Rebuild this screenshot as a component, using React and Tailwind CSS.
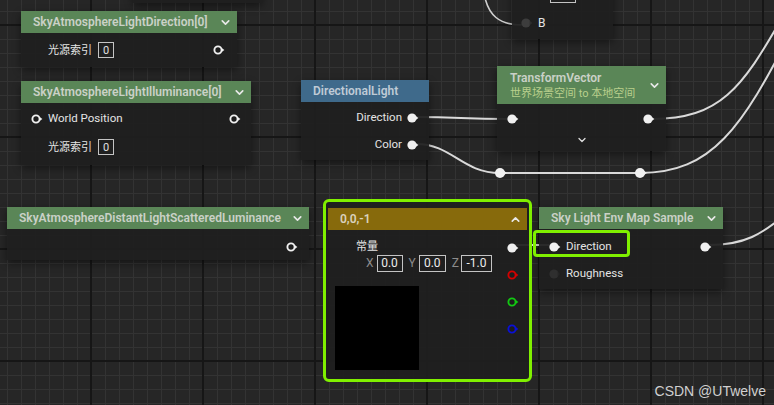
import React from "react";
import { ChevronDown, ChevronUp } from "lucide-react";

// Pin: filled dot with a little arrow, or a hollow ring for unlinked pins
const Pin = ({ hollow = false, color = "#f0f0f0", arrow }) => (
  <svg width="12" height="10" viewBox="0 0 12 10" className="shrink-0">
    {hollow ? (
      <circle cx="5" cy="5" r="3.6" fill="#1d1d1d" stroke={color} strokeWidth="1.9" />
    ) : (
      <circle cx="5" cy="5" r="4.6" fill={color} />
    )}
    <path d="M8.6 2.9 L11.4 5 L8.6 7.1 Z" fill={arrow || color} />
  </svg>
);

const Header = ({ title, bg, text = "text-[#cad1c7]", up = false, className = "" }) => (
  <div className={`flex h-[22px] items-center justify-between pl-3 pr-[5px] ${bg} ${className}`}>
    <span className={`text-[12px] font-semibold leading-none ${text}`}>{title}</span>
    {up ? (
      <ChevronUp size={13} strokeWidth={3} className="text-[#e8e8e8]" />
    ) : (
      <ChevronDown size={13} strokeWidth={3} className="text-[#e8e8e8]" />
    )}
  </div>
);

const IndexBox = ({ value }) => (
  <span className="flex h-[16px] w-[16px] items-center justify-center border border-[#c4c4c4] text-[11px] leading-none text-[#e0e0e0]">
    {value}
  </span>
);

const NumBox = ({ value, w }) => (
  <span className={`flex h-[17px] ${w} items-center justify-center border border-[#c4c4c4] text-[12px] leading-none text-[#ececec]`}>
    {value}
  </span>
);

const nodeBody = "bg-[rgba(31,31,31,0.94)]";
const nodeShadow = "shadow-[0_3px_8px_rgba(0,0,0,0.45)]";

function Grid() {
  return (
    <svg className="absolute inset-0" width="774" height="405">
      <defs>
        <pattern id="minor" width="14" height="14" patternUnits="userSpaceOnUse" x="7" y="11">
          <path d="M0 0.5 H14 M0.5 0 V14" stroke="#333333" strokeWidth="1" fill="none" />
        </pattern>
        <pattern id="major" width="112" height="112" patternUnits="userSpaceOnUse" x="90" y="24">
          <path d="M0 1 H112 M1 0 V112" stroke="#161616" strokeWidth="2" fill="none" />
        </pattern>
      </defs>
      <rect width="774" height="405" fill="#262626" />
      <rect width="774" height="405" fill="url(#minor)" />
      <rect width="774" height="405" fill="url(#major)" />
    </svg>
  );
}

function Wires() {
  const knot = (x, y) => (
    <g key={x}>
      <circle cx={x} cy={y} r="5" fill="#f2f2f2" />
      <path d={`M${x + 3.8} ${y - 2.2} L${x + 6.8} ${y} L${x + 3.8} ${y + 2.2} Z`} fill="#f2f2f2" />
    </g>
  );
  return (
    <svg className="absolute inset-0" width="774" height="405" fill="none">
      <g stroke="#d9d9d9" strokeWidth="2" strokeLinecap="round">
        <path d="M485 -2 C489 14, 498 25, 522 25" stroke="#cfcfcf" strokeWidth="1.6" />
        <path d="M416 117 C460 117, 462 119, 508 119" />
        <path d="M416 144 C452 144, 462 173, 500 173 L640 173" />
        <path d="M652 119 C720 119, 742 88, 782 18" />
        <path d="M640 173 C712 173, 742 128, 792 30" />
        <path d="M516 245 L550 245" />
        <path d="M709 245 C745 245, 762 234, 786 214" />
      </g>
      {knot(500, 173)}
      {knot(640, 173)}
    </svg>
  );
}

export default function App() {
  return (
    <div className="relative h-[405px] w-[774px] overflow-hidden bg-[#262626] font-['Roboto','Noto_Sans_CJK_SC',sans-serif] text-[#e4e4e4]">
      <Grid />
      <Wires />

      {/* partial nodes cut by the top edge */}
      <div className={`absolute left-[133px] top-[-20px] h-[23px] w-[129px] ${nodeBody} ${nodeShadow}`} />
      <div className={`absolute left-[512px] top-[-12px] flex h-[51px] w-[101px] flex-col ${nodeBody} ${nodeShadow}`}>
        <div className="ml-[38px] h-[15px] w-[26px] border border-[#c4c4c4]" />
        <div className="mt-[14px] flex items-center gap-[5px] pl-[9px]">
          <Pin color="#3d3d3d" arrow="#2e2e2e" />
          <span className="text-[12px] leading-none">B</span>
        </div>
      </div>

      {/* SkyAtmosphereLightDirection */}
      <div className={`absolute left-[21px] top-[11px] w-[216px] ${nodeShadow}`}>
        <Header title="SkyAtmosphereLightDirection[0]" bg="bg-[#5a8657]" />
        <div className={`flex h-[34px] items-center justify-between pl-[27px] pr-[12px] ${nodeBody}`}>
          <div className="flex items-center gap-[6px]">
            <span className="text-[11px] leading-none">光源索引</span>
            <IndexBox value="0" />
          </div>
          <Pin hollow />
        </div>
      </div>

      {/* SkyAtmosphereLightIlluminance */}
      <div className={`absolute left-[21px] top-[81px] w-[230px] ${nodeShadow}`}>
        <Header title="SkyAtmosphereLightIlluminance[0]" bg="bg-[#5a8657]" />
        <div className={`flex h-[62px] flex-col pt-[2px] ${nodeBody}`}>
          <div className="flex h-[28px] items-center justify-between pl-[10px] pr-[10px]">
            <div className="flex items-center gap-[5px]">
              <Pin hollow />
              <span className="text-[11.5px] leading-none">World Position</span>
            </div>
            <Pin hollow />
          </div>
          <div className="flex h-[28px] items-center gap-[6px] pl-[27px]">
            <span className="text-[11px] leading-none">光源索引</span>
            <IndexBox value="0" />
          </div>
        </div>
      </div>

      {/* DirectionalLight */}
      <div className={`absolute left-[301px] top-[80px] w-[128px] ${nodeShadow}`}>
        <div className="flex h-[22px] items-center bg-[#3f6a8b] pl-3">
          <span className="text-[12px] font-semibold leading-none text-[#bfcbd6]">DirectionalLight</span>
        </div>
        <div className={`flex h-[58px] flex-col pt-[2px] pr-[10px] ${nodeBody}`}>
          <div className="flex h-[27px] items-center justify-end gap-[5px]">
            <span className="text-[11.5px] leading-none">Direction</span>
            <Pin />
          </div>
          <div className="flex h-[27px] items-center justify-end gap-[5px]">
            <span className="text-[11.5px] leading-none">Color</span>
            <Pin />
          </div>
        </div>
      </div>

      {/* TransformVector */}
      <div className={`absolute left-[497px] top-[66px] w-[169px] ${nodeShadow}`}>
        <div className="flex h-[38px] items-center justify-between bg-[#5a8657] pl-[13px] pr-[5px]">
          <div className="flex flex-col gap-[4px]">
            <span className="text-[12px] font-semibold leading-none text-[#cad1c7]">TransformVector</span>
            <span className="text-[11px] leading-none text-[#b9cf8c]">世界场景空间 to 本地空间</span>
          </div>
          <ChevronDown size={13} strokeWidth={3} className="text-[#e8e8e8]" />
        </div>
        <div className={`flex h-[47px] flex-col ${nodeBody}`}>
          <div className="flex h-[30px] items-center justify-between pl-[10px] pr-[11px]">
            <Pin />
            <Pin />
          </div>
          <div className="flex h-[17px] items-start justify-center">
            <ChevronDown size={12} strokeWidth={2.5} className="text-[#e0e0e0]" />
          </div>
        </div>
      </div>

      {/* SkyAtmosphereDistantLightScatteredLuminance */}
      <div className={`absolute left-[7px] top-[207px] w-[302px] ${nodeShadow}`}>
        <Header title="SkyAtmosphereDistantLightScatteredLuminance" bg="bg-[#5a8657]" className="h-[21px]" />
        <div className={`flex h-[31px] items-start justify-end pr-[11px] pt-[13px] ${nodeBody}`}>
          <Pin hollow />
        </div>
      </div>

      {/* Constant3Vector 0,0,-1 (selected) */}
      <div className={`absolute left-[323px] top-[199px] flex h-[183px] w-[209px] flex-col rounded-[6px] border-[3px] border-[#80f000] px-[2px] pt-[6px] ${nodeBody}`}>
        <Header title="0,0,-1" bg="bg-[#876a0c]" text="text-[#dad2bd]" up className="h-[20px]" />
        <div className="flex flex-1 justify-between">
          <div className="flex flex-col pl-[7px] pt-[8px]">
            <span className="ml-[21px] flex h-[16px] items-center text-[11px] leading-none">常量</span>
            <div className="ml-[31px] flex h-[18px] items-center gap-[6px]">
              <div className="flex items-center gap-[3px]">
                <span className="text-[12px] leading-none text-[#8c8c8c]">X</span>
                <NumBox value="0.0" w="w-[26px]" />
              </div>
              <div className="flex items-center gap-[3px]">
                <span className="text-[12px] leading-none text-[#8c8c8c]">Y</span>
                <NumBox value="0.0" w="w-[27px]" />
              </div>
              <div className="flex items-center gap-[2px]">
                <span className="text-[12px] leading-none text-[#8c8c8c]">Z</span>
                <NumBox value="-1.0" w="w-[31px]" />
              </div>
            </div>
            <div className="mt-[14px] h-[84px] w-[84px] bg-black" />
          </div>
          <div className="flex flex-col pr-[8px] pt-[4px]">
            <div className="flex h-[27px] items-center"><Pin /></div>
            <div className="flex h-[27px] items-center"><Pin hollow color="#d40000" /></div>
            <div className="flex h-[27px] items-center"><Pin hollow color="#12c812" /></div>
            <div className="flex h-[27px] items-center"><Pin hollow color="#0a10d8" /></div>
          </div>
        </div>
      </div>

      {/* Sky Light Env Map Sample */}
      <div className={`absolute left-[539px] top-[207px] w-[184px] ${nodeShadow}`}>
        <Header title="Sky Light Env Map Sample" bg="bg-[#5a8657]" className="h-[21px]" />
        <div className={`flex h-[60px] flex-col pt-[4px] ${nodeBody}`}>
          <div className="flex h-[27px] items-center justify-between pl-[10px] pr-[11px]">
            <div className="flex items-center gap-[5px]">
              <Pin />
              <span className="text-[11.5px] leading-none">Direction</span>
            </div>
            <Pin />
          </div>
          <div className="flex h-[27px] items-center gap-[5px] pl-[10px]">
            <Pin color="#2f2f2f" arrow="#262626" />
            <span className="text-[11.5px] leading-none">Roughness</span>
          </div>
        </div>
      </div>
      <div className="absolute left-[533px] top-[230px] h-[27px] w-[97px] rounded-[4px] border-[3px] border-[#80f000]" />

      <span className="absolute bottom-[7px] right-[8px] font-['Liberation_Sans',sans-serif] text-[14px] leading-none text-[#d0d0d0]">
        CSDN @UTwelve
      </span>
    </div>
  );
}
